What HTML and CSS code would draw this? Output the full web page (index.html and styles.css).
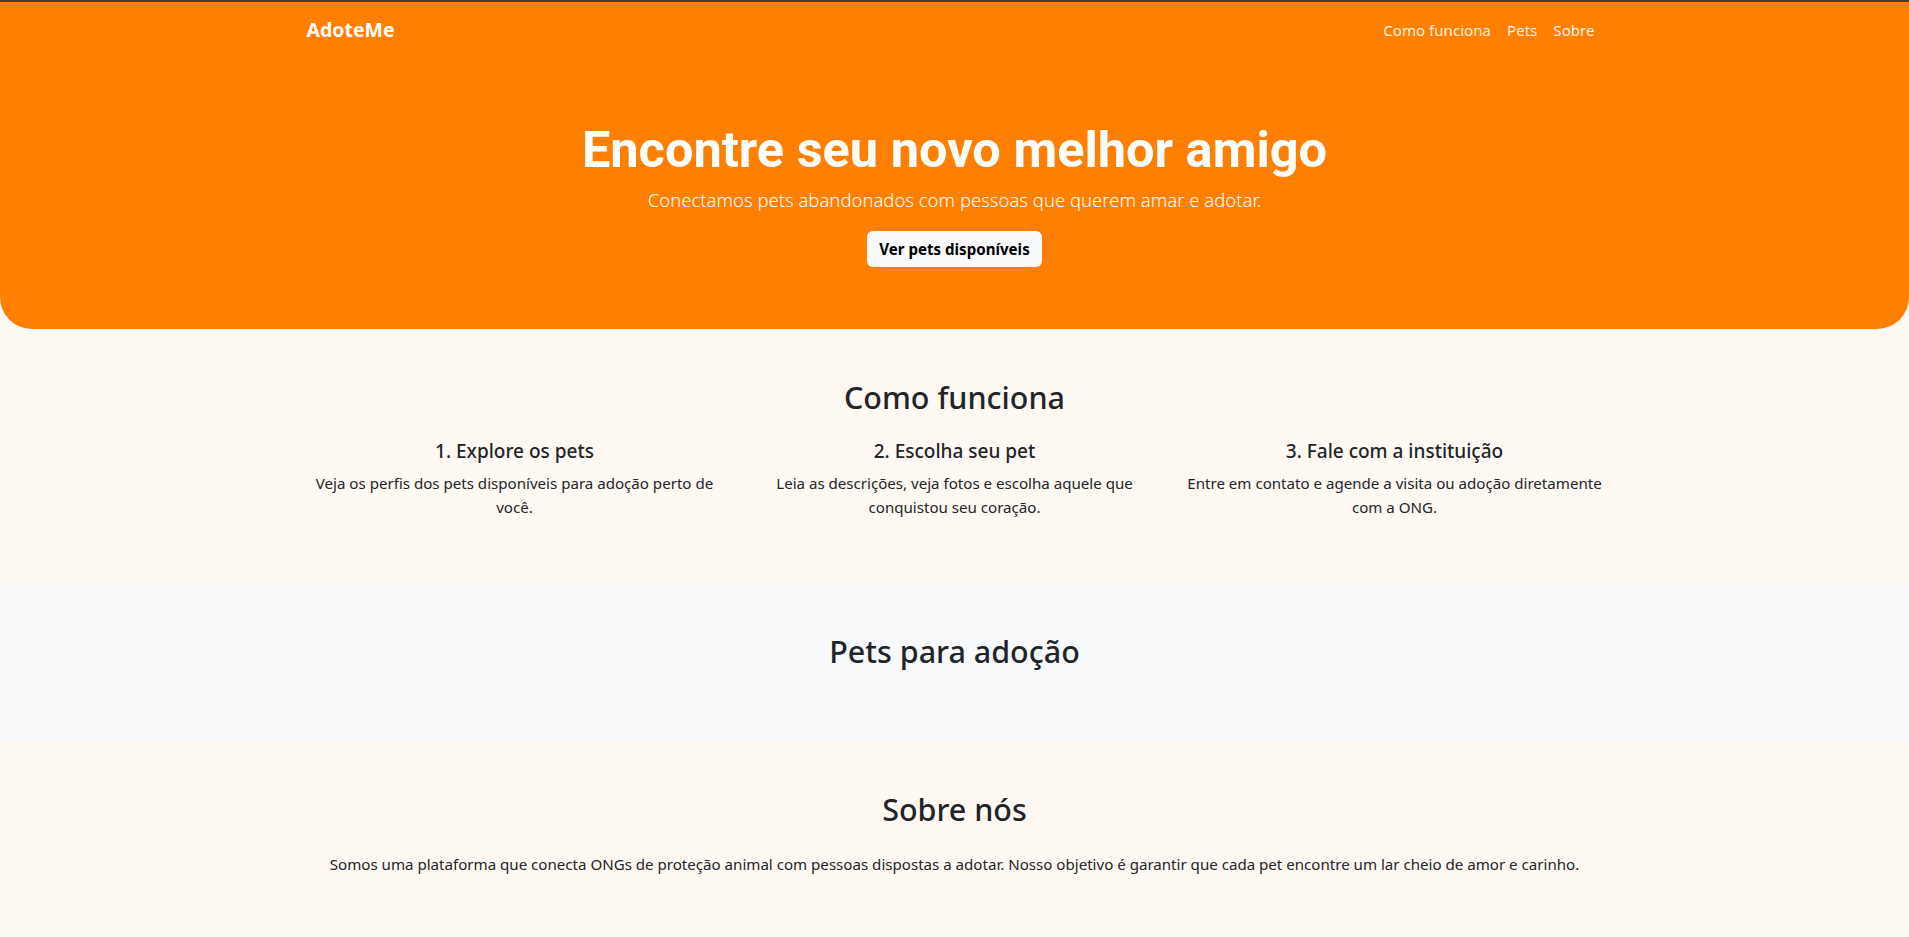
FILE: index.html
```html
<!DOCTYPE html>
<html lang="pt-BR">
<head>
<meta charset="utf-8">
<title>AdoteMe</title>
<link rel="stylesheet" href="styles.css">
</head>
<body>
<header class="hero">
  <nav class="navbar">
    <div class="container nav-inner">
      <a class="brand" href="#">AdoteMe</a>
      <ul class="nav-links">
        <li><a href="#como">Como funciona</a></li>
        <li><a href="#pets">Pets</a></li>
        <li><a href="#sobre">Sobre</a></li>
      </ul>
    </div>
  </nav>
  <div class="container hero-body">
    <h1 class="hero-title">Encontre seu novo melhor amigo</h1>
    <p class="lead">Conectamos pets abandonados com pessoas que querem amar e adotar.</p>
    <a class="btn-light" href="#pets">Ver pets disponíveis</a>
  </div>
</header>

<section id="como" class="section">
  <div class="container center">
    <h2 class="section-title">Como funciona</h2>
    <div class="steps">
      <div class="step">
        <h5>1. Explore os pets</h5>
        <p>Veja os perfis dos pets disponíveis para adoção perto de você.</p>
      </div>
      <div class="step">
        <h5>2. Escolha seu pet</h5>
        <p>Leia as descrições, veja fotos e escolha aquele que conquistou seu coração.</p>
      </div>
      <div class="step">
        <h5>3. Fale com a instituição</h5>
        <p>Entre em contato e agende a visita ou adoção diretamente com a ONG.</p>
      </div>
    </div>
  </div>
</section>

<section id="pets" class="section section-light">
  <div class="container center">
    <h2 class="section-title">Pets para adoção</h2>
  </div>
</section>

<section id="sobre" class="section section-last">
  <div class="container center">
    <h2 class="section-title title-sobre">Sobre nós</h2>
    <p>Somos uma plataforma que conecta ONGs de proteção animal com pessoas dispostas a adotar. Nosso objetivo é garantir que cada pet encontre um lar cheio de amor e carinho.</p>
  </div>
</section>
</body>
</html>
```

FILE: styles.css
```css
html {
  overflow-y: scroll;
}
html::-webkit-scrollbar {
  width: 4px;
  background: #fff9f3;
}
html::-webkit-scrollbar-thumb {
  background: linear-gradient(to right, transparent 50%, #8a8a8a 50%);
}
* { box-sizing: border-box; }
body {
  margin: 0;
  border-top: 2px solid #3d3d3d;
  background: #fff9f3;
  color: #212529;
  font-family: "Noto Sans", "Open Sans", sans-serif;
  font-size: 15.1px;
  line-height: 24px;
}
a { text-decoration: none; }
h1, h2, h5, p { margin: 0; }

.container {
  max-width: 1320px;
  margin: 0 auto;
  padding: 0 12px;
}
.center { text-align: center; }

.hero {
  background: #ff8000;
  color: #fff;
  border-radius: 0 0 32px 32px;
  padding-bottom: 62px;
}
.navbar { padding: 8px 0; }
.nav-inner {
  display: flex;
  align-items: center;
  justify-content: space-between;
}
.brand {
  color: #fff;
  font-weight: 700;
  font-size: 19.5px;
  line-height: 30px;
  padding: 5px 0;
}
.nav-links {
  display: flex;
  list-style: none;
  margin: 0;
  padding: 0;
}
.nav-links a {
  display: block;
  color: rgba(255, 255, 255, 0.92);
  padding: 8px;
}
.hero-body {
  text-align: center;
  padding-top: 58px;
}
.hero-title {
  font-family: Roboto, "Noto Sans", sans-serif;
  font-size: 50.5px;
  font-weight: 700;
  line-height: 67px;
  margin-bottom: 2px;
}
.lead {
  font-size: 18.5px;
  font-weight: 300;
  line-height: 30px;
  margin-bottom: 16px;
}
.btn-light {
  display: inline-block;
  background: #f8f9fa;
  color: #000;
  font-weight: 700;
  padding: 6px 12px;
  border-radius: 6px;
  line-height: 24px;
}

.section { padding: 48px 0; }
.section-light { background: #f8f9fa; }
.section-last { padding-bottom: 150px; }
.section-title {
  font-size: 30.5px;
  font-weight: 500;
  line-height: 38px;
  padding-top: 1px;
  margin-bottom: 23px;
}
.title-sobre { margin-bottom: 24px; }
.steps {
  display: grid;
  grid-template-columns: repeat(3, 1fr);
  margin: 0 -12px;
}
.step { padding: 0 12px; }
.step h5 {
  font-size: 19px;
  font-weight: 500;
  line-height: 24px;
  margin-bottom: 8px;
}
.step p, .section p { margin-bottom: 16px; }
```
